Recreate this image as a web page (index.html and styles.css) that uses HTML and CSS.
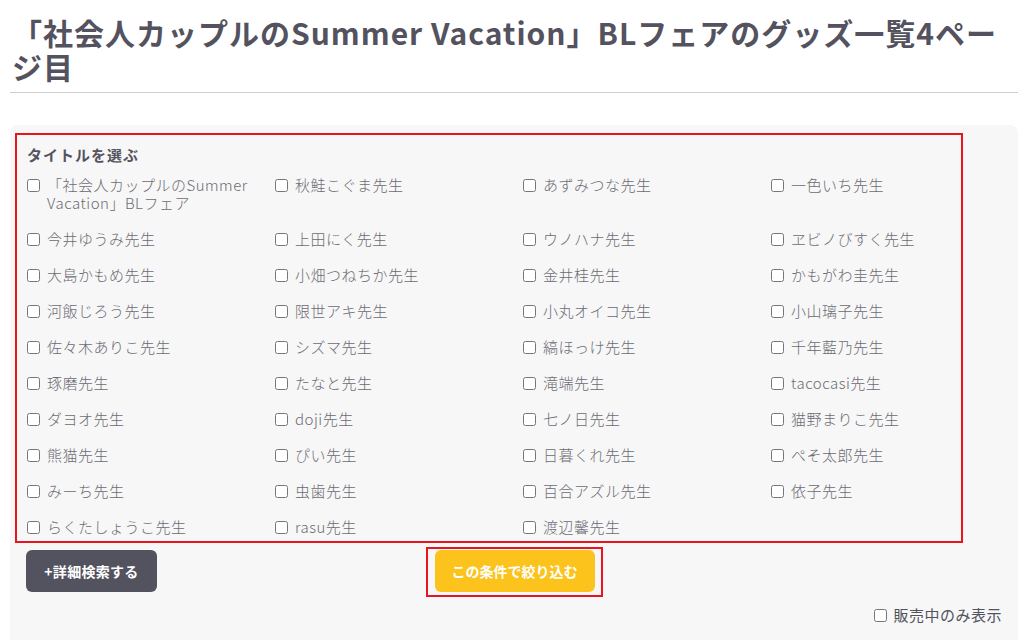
FILE: index.html
```html
<!doctype html>
<html lang="ja">
<head>
    <meta charset="UTF-8">
    <title>グッズ一覧</title>
    <link rel="stylesheet" href="styles.css">
</head>
<body>
    <h1 class="page-title">「社会人カップルのSummer Vacation」BLフェアのグッズ一覧4ページ目</h1>
    <hr class="rule">
    <div class="search-panel">
        <div class="title-box">
            <p class="box-label">タイトルを選ぶ</p>
            <div class="check-grid">
                <label class="check"><input type="checkbox"><span>「社会人カップルのSummer Vacation」BLフェア</span></label>
                <label class="check"><input type="checkbox"><span>秋鮭こぐま先生</span></label>
                <label class="check"><input type="checkbox"><span>あずみつな先生</span></label>
                <label class="check"><input type="checkbox"><span>一色いち先生</span></label>
                <label class="check"><input type="checkbox"><span>今井ゆうみ先生</span></label>
                <label class="check"><input type="checkbox"><span>上田にく先生</span></label>
                <label class="check"><input type="checkbox"><span>ウノハナ先生</span></label>
                <label class="check"><input type="checkbox"><span>ヱビノびすく先生</span></label>
                <label class="check"><input type="checkbox"><span>大島かもめ先生</span></label>
                <label class="check"><input type="checkbox"><span>小畑つねちか先生</span></label>
                <label class="check"><input type="checkbox"><span>金井桂先生</span></label>
                <label class="check"><input type="checkbox"><span>かもがわ圭先生</span></label>
                <label class="check"><input type="checkbox"><span>河飯じろう先生</span></label>
                <label class="check"><input type="checkbox"><span>限世アキ先生</span></label>
                <label class="check"><input type="checkbox"><span>小丸オイコ先生</span></label>
                <label class="check"><input type="checkbox"><span>小山璃子先生</span></label>
                <label class="check"><input type="checkbox"><span>佐々木ありこ先生</span></label>
                <label class="check"><input type="checkbox"><span>シズマ先生</span></label>
                <label class="check"><input type="checkbox"><span>縞ほっけ先生</span></label>
                <label class="check"><input type="checkbox"><span>千年藍乃先生</span></label>
                <label class="check"><input type="checkbox"><span>琢磨先生</span></label>
                <label class="check"><input type="checkbox"><span>たなと先生</span></label>
                <label class="check"><input type="checkbox"><span>滝端先生</span></label>
                <label class="check"><input type="checkbox"><span>tacocasi先生</span></label>
                <label class="check"><input type="checkbox"><span>ダヨオ先生</span></label>
                <label class="check"><input type="checkbox"><span>doji先生</span></label>
                <label class="check"><input type="checkbox"><span>七ノ日先生</span></label>
                <label class="check"><input type="checkbox"><span>猫野まりこ先生</span></label>
                <label class="check"><input type="checkbox"><span>熊猫先生</span></label>
                <label class="check"><input type="checkbox"><span>ぴい先生</span></label>
                <label class="check"><input type="checkbox"><span>日暮くれ先生</span></label>
                <label class="check"><input type="checkbox"><span>ぺそ太郎先生</span></label>
                <label class="check"><input type="checkbox"><span>みーち先生</span></label>
                <label class="check"><input type="checkbox"><span>虫歯先生</span></label>
                <label class="check"><input type="checkbox"><span>百合アズル先生</span></label>
                <label class="check"><input type="checkbox"><span>依子先生</span></label>
                <label class="check"><input type="checkbox"><span>らくたしょうこ先生</span></label>
                <label class="check"><input type="checkbox"><span>rasu先生</span></label>
                <label class="check"><input type="checkbox"><span>渡辺馨先生</span></label>
            </div>
        </div>
        <div class="button-row">
            <button class="btn btn-detail">+詳細検索する</button>
            <div class="submit-box">
                <button class="btn btn-submit">この条件で絞り込む</button>
            </div>
        </div>
        <div class="sale-row">
            <label class="sale-check"><input type="checkbox"><span>販売中のみ表示</span></label>
        </div>
    </div>
</body>
</html>
```

FILE: styles.css
```css
*{
    margin:0;
    padding:0;
    box-sizing:border-box;
}
body{
    font-family:"Noto Sans CJK JP","Noto Sans",sans-serif;
    background:#fff;
    color:#53525e;
    text-spacing-trim:space-all;
}
.page-title{
    padding:15px 8px 0 12px;
    font-size:30px;
    line-height:34px;
    letter-spacing:1px;
    font-weight:bold;
    color:#53525e;
}
.rule{
    margin:9px 8px 0 10px;
    border:0;
    border-top:1px solid #d0d0d0;
}
.search-panel{
    margin:32px 8px 0 10px;
    padding:8px 0 30px 5px;
    background:#f7f7f7;
    border-radius:8px;
}
.title-box{
    width:948px;
    border:2px solid #e8141e;
    padding:9px 0 5px 10px;
}
.box-label{
    font-size:15px;
    line-height:22px;
    letter-spacing:1px;
    font-weight:bold;
    color:#55545e;
    margin-bottom:10px;
}
.check-grid{
    display:grid;
    grid-template-columns:repeat(4,248px);
    row-gap:18px;
}
.check{
    display:flex;
    align-items:flex-start;
    gap:7px;
    padding-right:18px;
    font-size:15px;
    line-height:18px;
    letter-spacing:0.5px;
    font-weight:300;
    color:#6c6b74;
}
.check input{
    width:13px;
    height:13px;
    margin:3px 0 0 0;
    flex:none;
}
.button-row{
    display:grid;
    grid-template-columns:1fr auto 1fr;
    margin-top:4px;
    margin-left:-5px;
}
.btn{
    border:0;
    border-radius:6px;
    color:#fff;
    font-family:inherit;
    font-size:14px;
    font-weight:bold;
    height:42px;
}
.btn-detail{
    justify-self:start;
    margin:3px 0 0 16px;
    width:131px;
    letter-spacing:0.3px;
    background:#53525f;
}
.submit-box{
    border:2px solid #e8141e;
    padding:1px 6px 3px 7px;
}
.btn-submit{
    width:160px;
    background:#fbc31b;
}
.sale-row{
    display:flex;
    justify-content:flex-end;
    margin-top:7px;
    padding-right:16px;
}
.sale-check{
    display:flex;
    align-items:center;
    gap:6px;
    font-size:15px;
    line-height:22px;
    letter-spacing:0.5px;
    color:#53525e;
}
.sale-check input{
    width:13px;
    height:13px;
    margin:0;
}
```
